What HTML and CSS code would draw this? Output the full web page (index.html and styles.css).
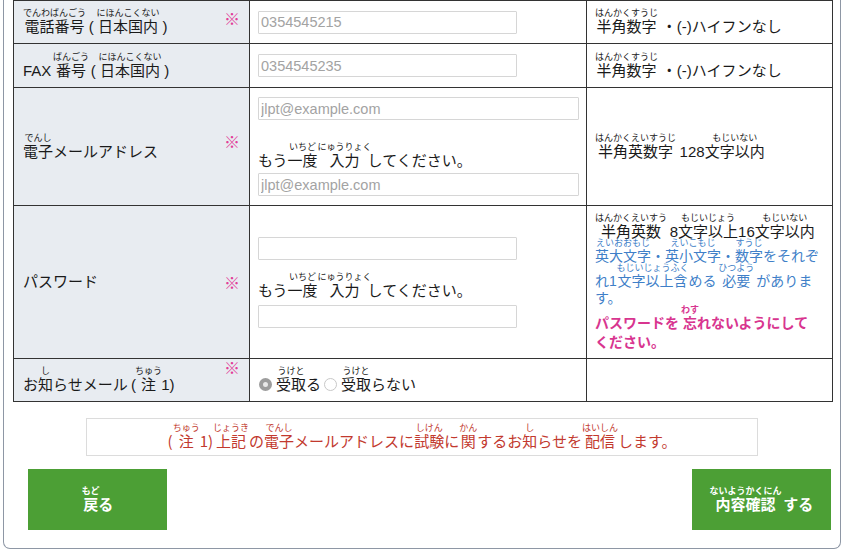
FILE: index.html
```html
<!DOCTYPE html>
<html lang="ja">
<head>
<meta charset="utf-8">
<title>確認</title>
<link rel="stylesheet" href="styles.css">
</head>
<body>
<div class="frame">
  <table class="form">
    <colgroup><col class="c1"><col class="c2"><col class="c3"></colgroup>
    <tr class="r1">
      <th><div class="lab"><span><ruby>電話番号<rt>でんわばんごう</rt></ruby> ( <ruby>日本国内<rt>にほんこくない</rt></ruby> )</span><span class="req m1">※</span></div></th>
      <td class="inp"><input class="tx" type="text" placeholder="0354545215"></td>
      <td class="note"><ruby>半角数字<rt>はんかくすうじ</rt></ruby> ・(-)ハイフンなし</td>
    </tr>
    <tr class="r2">
      <th><div class="lab"><span>FAX <ruby>番号<rt>ばんごう</rt></ruby> ( <ruby>日本国内<rt>にほんこくない</rt></ruby> )</span></div></th>
      <td class="inp"><input class="tx" type="text" placeholder="0354545235"></td>
      <td class="note"><ruby>半角数字<rt>はんかくすうじ</rt></ruby> ・(-)ハイフンなし</td>
    </tr>
    <tr class="r3">
      <th><div class="lab"><span><ruby>電子<rt>でんし</rt></ruby>メールアドレス</span><span class="req m3">※</span></div></th>
      <td class="inp">
        <input class="tx wide" type="text" placeholder="jlpt@example.com">
        <p class="again a3">もう<ruby>一度<rt>いちど</rt></ruby><ruby>入力<rt>にゅうりょく</rt></ruby>してください。</p>
        <input class="tx wide" type="text" placeholder="jlpt@example.com">
      </td>
      <td class="note"><ruby>半角英数字<rt>はんかくえいすうじ</rt></ruby> 128<ruby>文字以内<rt>もじいない</rt></ruby></td>
    </tr>
    <tr class="r4">
      <th><div class="lab"><span>パスワード</span><span class="req">※</span></div></th>
      <td class="inp">
        <input class="tx" type="password">
        <p class="again a4">もう<ruby>一度<rt>いちど</rt></ruby><ruby>入力<rt>にゅうりょく</rt></ruby>してください。</p>
        <input class="tx" type="password">
      </td>
      <td class="note pw">
        <p class="blk"><ruby>半角英数<rt>はんかくえいすう</rt></ruby> 8<ruby>文字以上<rt>もじいじょう</rt></ruby>16<ruby>文字以内<rt>もじいない</rt></ruby></p>
        <p class="blue"><ruby>英大文字<rt>えいおおもじ</rt></ruby>・<ruby>英小文字<rt>えいこもじ</rt></ruby>・<ruby>数字<rt>すうじ</rt></ruby>をそれぞ<br>れ1<ruby>文字以上含<rt>もじいじょうふく</rt></ruby>める <ruby>必要<rt>ひつよう</rt></ruby> がありま<br>す。</p>
        <p class="pink">パスワードを <ruby>忘<rt>わす</rt></ruby>れないようにして<br>ください。</p>
      </td>
    </tr>
    <tr class="r5">
      <th><div class="lab"><span>お<ruby>知<rt>し</rt></ruby>らせメール ( <ruby>注<rt>ちゅう</rt></ruby> 1)</span><span class="req m5">※</span></div></th>
      <td class="inp">
        <div class="radios">
          <span class="radio on"></span><span class="rl"><ruby>受取<rt>うけと</rt></ruby>る</span>
          <span class="radio"></span><span class="rl"><ruby>受取<rt>うけと</rt></ruby>らない</span>
        </div>
      </td>
      <td class="note"></td>
    </tr>
  </table>

  <div class="notice">( <ruby>注<rt>ちゅう</rt></ruby> 1) <ruby>上記<rt>じょうき</rt></ruby> の<ruby>電子<rt>でんし</rt></ruby>メールアドレスに<ruby>試験<rt>しけん</rt></ruby>に<ruby>関<rt>かん</rt></ruby>するお<ruby>知<rt>し</rt></ruby>らせを <ruby>配信<rt>はいしん</rt></ruby> します。</div>

  <div class="actions">
    <button class="btn" type="button"><ruby>戻<rt>もど</rt></ruby>る</button>
    <button class="btn" type="button"><ruby>内容確認<rt>ないようかくにん</rt></ruby> する</button>
  </div>
</div>
</body>
</html>
```

FILE: styles.css
```css
html, body {
  margin: 0;
  padding: 0;
  background: #ffffff;
}

body {
  font-family: "Liberation Sans", "Noto Sans CJK JP", sans-serif;
  font-size: 15px;
  color: #1a1a1a;
}

.frame {
  margin: 0 3px;
  height: 549px;
  box-sizing: border-box;
  border: 1px solid #8e97a5;
  border-top: none;
  border-radius: 0 0 7px 7px;
  padding: 0 9px;
}

ruby {
  ruby-align: center;
}

rt {
  font-size: 9px;
  line-height: 1;
  ruby-align: center;
}

.form {
  width: 819px;
  border-collapse: collapse;
  table-layout: fixed;
  border: 1px solid #333;
}

.c1 { width: 236px; }
.c2 { width: 337px; }
.c3 { width: 246px; }

.form th,
.form td {
  border: 1px solid #333;
  padding: 0;
  vertical-align: middle;
  text-align: left;
  font-weight: normal;
  line-height: 18px;
}

.form th {
  background: #e8ecf1;
  padding: 0 9px 0 9px;
}

.r1 th, .r1 td { height: 42px; }
.r2 th, .r2 td { height: 43px; }
.r3 th, .r3 td { height: 117px; }
.r4 th, .r4 td { height: 152px; }
.r5 th, .r5 td { height: 42px; }

.lab {
  display: flex;
  justify-content: space-between;
  align-items: center;
  word-spacing: -1px;
}

.req {
  color: #e23f99;
  font-family: "Noto Sans CJK JP", sans-serif;
  font-size: 16px;
  font-weight: bold;
  line-height: 16px;
  margin-right: 0;
}

.m1 { margin-bottom: 8px; }
.m3 { margin-bottom: 12px; }
.m5 { margin-bottom: 26px; }

.inp {
  padding: 0 8px !important;
}

.tx {
  display: block;
  box-sizing: border-box;
  width: 259px;
  height: 23px;
  margin: 0;
  padding: 0 2px;
  border: 1px solid #d6d6d6;
  border-radius: 1px;
  background: #fff;
  font-family: "Liberation Sans", sans-serif;
  font-size: 14.5px;
  color: #333;
  outline: none;
}

.tx.wide { width: 321px; }

.tx::placeholder { color: #a3a3a3; }

.again {
  margin: 0;
  line-height: 18px;
}

.a3 { margin: 22px 0 3px; }
.a4 { margin: 12px 0 5px; }

.radios {
  display: flex;
  align-items: flex-end;
  padding-left: 1px;
}

.radio {
  width: 13px;
  height: 13px;
  box-sizing: border-box;
  border-radius: 50%;
  border: 1px solid #c8c8c8;
  background: #fff;
  margin: 0 4px 3px 0;
  flex: none;
}

.radio.on {
  border: 4px solid #9d9d9d;
  background: #e9e9e9;
}

.rl { margin-right: 3px; }

.note {
  padding: 0 8px !important;
}

.pw p { margin: 0; }

.pw .blk { line-height: 17px; }

.pw .blue {
  color: #3f7fc8;
  font-size: 14px;
  line-height: 17px;
  margin-top: -2px;
}

.pw .pink {
  color: #d8358f;
  font-size: 14px;
  font-weight: bold;
  line-height: 19px;
  margin-top: -2px;
}

.notice {
  margin: 16px auto 0;
  width: 672px;
  height: 38px;
  box-sizing: border-box;
  border: 1px solid #dcdcdc;
  display: flex;
  align-items: flex-end;
  justify-content: center;
  padding-bottom: 5px;
  color: #c2392e;
  font-family: "Noto Sans CJK JP", sans-serif;
  font-size: 15px;
  line-height: 18px;
}

.actions {
  display: flex;
  justify-content: space-between;
  margin-top: 13px;
  padding-left: 15px;
}

.btn {
  width: 139px;
  height: 61px;
  border: none;
  border-radius: 0;
  background: #4c9f35;
  color: #fff;
  font-family: "Noto Sans CJK JP", sans-serif;
  font-size: 15px;
  font-weight: bold;
  line-height: 18px;
  padding: 8px 0 0;
  cursor: pointer;
}
```
